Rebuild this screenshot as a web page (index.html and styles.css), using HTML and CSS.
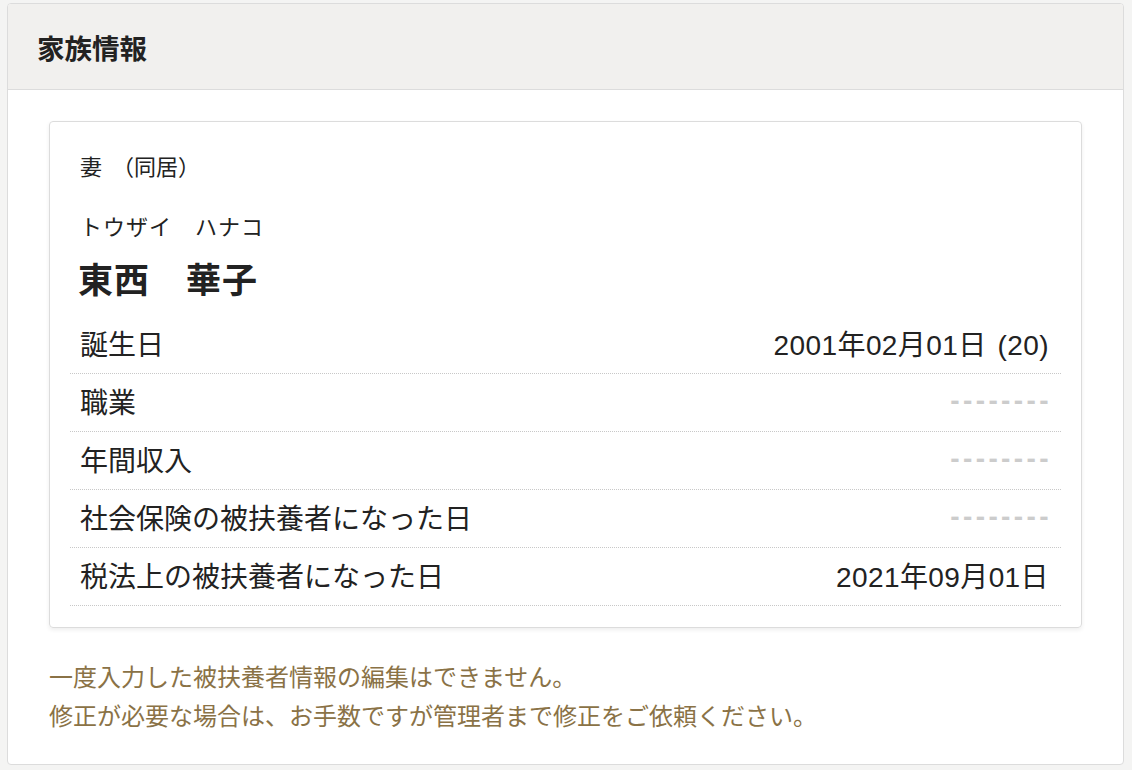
FILE: index.html
```html
<!DOCTYPE html>
<html lang="ja">
<head>
    <meta charset="UTF-8">
    <meta name="viewport" content="width=device-width, initial-scale=1.0">
    <title>家族情報</title>
    <link rel="stylesheet" href="styles.css">
</head>
<body>
    <section class="panel">
        <header class="panel-header">
            <h1>家族情報</h1>
        </header>

        <div class="panel-body">
            <div class="family-card">
                <p class="relation">妻<span class="relation-note">（同居）</span></p>
                <p class="kana">トウザイ　ハナコ</p>
                <p class="name">東西　華子</p>

                <dl class="details">
                    <div class="row">
                        <dt>誕生日</dt>
                        <dd>2001年02月01日<span class="age">(20)</span></dd>
                    </div>
                    <div class="row">
                        <dt>職業</dt>
                        <dd class="empty">--------</dd>
                    </div>
                    <div class="row">
                        <dt>年間収入</dt>
                        <dd class="empty">--------</dd>
                    </div>
                    <div class="row">
                        <dt>社会保険の被扶養者になった日</dt>
                        <dd class="empty">--------</dd>
                    </div>
                    <div class="row">
                        <dt>税法上の被扶養者になった日</dt>
                        <dd>2021年09月01日</dd>
                    </div>
                </dl>
            </div>

            <p class="notice">
                一度入力した被扶養者情報の編集はできません。<br>
                修正が必要な場合は、お手数ですが管理者まで修正をご依頼ください。
            </p>
        </div>
    </section>
</body>
</html>
```

FILE: styles.css
```css
body {
    margin: 0;
    padding: 3px 8px 5px 7px;
    font-family: 'Liberation Sans', 'Noto Sans CJK JP', sans-serif;
    color: #222;
    background-color: #f4f4f3;
}

.panel {
    background-color: #fff;
    border: 1px solid #dcdcdc;
    border-radius: 4px;
    overflow: hidden;
}

.panel-header {
    height: 85px;
    display: flex;
    align-items: center;
    padding: 0 30px;
    background-color: #f1f0ee;
    border-bottom: 1px solid #dcdcdc;
}

.panel-header h1 {
    margin: 0 0 0 -1px;
    font-size: 27.5px;
    font-weight: bold;
    color: #222;
}

.panel-body {
    padding: 31px 41px 28px 41px;
}

.family-card {
    border: 1px solid #dcdcdc;
    border-radius: 4px;
    box-shadow: 0 2px 4px rgba(0, 0, 0, 0.07);
    padding: 30px 20px 21px 20px;
}

.relation,
.kana,
.name {
    margin: 0;
    padding: 0 10px;
}

.relation {
    font-size: 22px;
    line-height: 32px;
}

.relation-note {
    margin-left: 10px;
}

.kana {
    margin-top: 29px;
    font-size: 22px;
    line-height: 30px;
    letter-spacing: 1px;
}

.name {
    margin-top: 18px;
    margin-left: -2px;
    font-size: 35px;
    font-weight: bold;
    line-height: 40px;
    letter-spacing: 1px;
}

.details {
    margin: 15px 0 0 0;
}

.row {
    height: 57px;
    box-sizing: border-box;
    height: 58px;
    display: flex;
    align-items: center;
    justify-content: space-between;
    padding: 0 12px 3px 10px;
    border-bottom: 1px dotted #c8c8c8;
    font-size: 28px;
}

.row dt,
.row dd {
    margin: 0;
}

.row dd {
    letter-spacing: 0.4px;
}

.row .age {
    margin-left: 11px;
}

.row dd.empty {
    color: #cccccc;
    font-size: 28px;
    font-weight: bold;
    letter-spacing: 3.4px;
    margin-right: -3px;
}

.notice {
    margin: 30px 0 0 0;
    font-size: 24px;
    line-height: 39px;
    color: #8a7246;
}
```
